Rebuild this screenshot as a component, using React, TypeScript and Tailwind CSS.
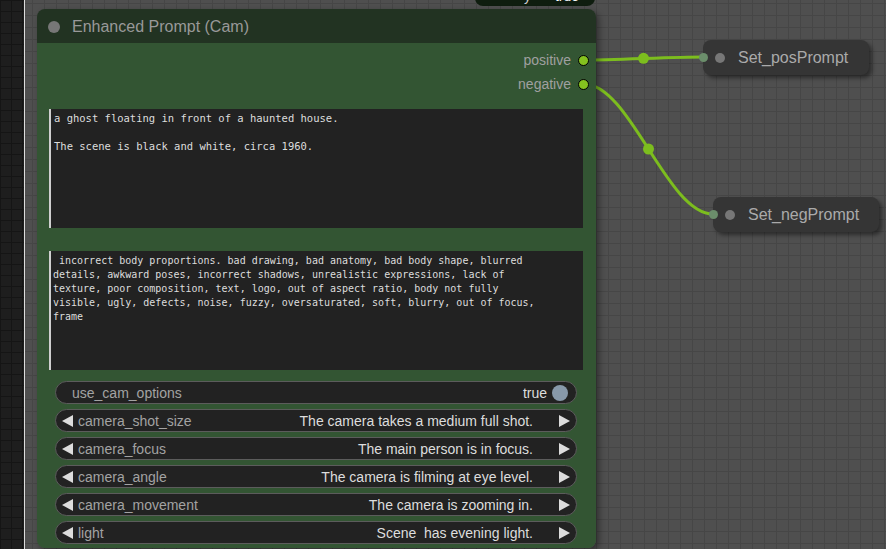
import React from "react";

const combos: [string, string][] = [
  ["camera_shot_size", "The camera takes a medium full shot."],
  ["camera_focus", "The main person is in focus."],
  ["camera_angle", "The camera is filming at eye level."],
  ["camera_movement", "The camera is zooming in."],
  ["light", "Scene  has evening light."],
];

const negText = [
  " incorrect body proportions. bad drawing, bad anatomy, bad body shape, blurred",
  "details, awkward poses, incorrect shadows, unrealistic expressions, lack of",
  "texture, poor composition, text, logo, out of aspect ratio, body not fully",
  "visible, ugly, defects, noise, fuzzy, oversaturated, soft, blurry, out of focus,",
  "frame",
];

const Arrow = ({ dir }: { dir: "left" | "right" }) => (
  <svg width="11" height="12" viewBox="0 0 11 12" className="shrink-0">
    {dir === "left" ? (
      <polygon points="11,0 0,6 11,12" fill="#dddddd" />
    ) : (
      <polygon points="0,0 11,6 0,12" fill="#dddddd" />
    )}
  </svg>
);

const SetNode = ({ label, className }: { label: string; className: string }) => (
  <div
    className={`absolute h-[35px] w-[166px] rounded-lg bg-[#353535] shadow-[3px_3px_4px_rgba(0,0,0,0.45)] flex items-center pl-[12px] gap-[13px] ${className}`}
  >
    {/* connected input slot */}
    <div className="absolute left-[-4px] top-[13px] w-[9px] h-[9px] rounded-full bg-[#6b8e6b]" />
    <div className="w-[10px] h-[10px] rounded-full bg-[#777]" />
    <span className="text-[16px] text-[#aaaaaa] leading-none">{label}</span>
  </div>
);

const App = () => {
  return (
    <div className="flex w-[886px] h-[549px] overflow-hidden font-['Liberation_Sans',Arial,sans-serif]">
      {/* side strip */}
      <div className="w-[24px] shrink-0 bg-[#1e1e1e] bg-[linear-gradient(to_right,#151515_1px,transparent_1px),linear-gradient(to_bottom,#151515_1px,transparent_1px)] bg-[size:11px_11px]" />
      <div className="w-px shrink-0 bg-[#dcdcdc]" />

      {/* canvas */}
      <div className="relative flex-1 bg-[#4f4f4f] bg-[linear-gradient(to_right,#464646_1px,transparent_1px),linear-gradient(to_bottom,#464646_1px,transparent_1px)] bg-[size:12px_12px] bg-[position:7px_3px]">
        {/* node peeking in from above */}
        <div className="absolute left-[450px] top-[-24px] w-[120px] h-[30px] rounded-lg bg-[#0f1d0f] flex items-end justify-end gap-6 pr-4 pb-[3px] overflow-hidden">
          <span className="text-[14px] leading-none text-[#ccc]">y</span>
          <span className="text-[14px] leading-none text-white">true</span>
        </div>

        {/* links */}
        <svg className="absolute inset-0 pointer-events-none" width="861" height="549">
          <path d="M559 60 C589 60 648 57 678 57" stroke="#7cbd1e" strokeWidth="3" fill="none" />
          <path d="M559 84 C605 84 642 214 688 214" stroke="#7cbd1e" strokeWidth="3" fill="none" />
          <circle cx="618.5" cy="58.3" r="5.5" fill="#7cbd1e" />
          <circle cx="623.5" cy="149" r="5.5" fill="#7cbd1e" />
        </svg>

        {/* main node */}
        <div className="absolute left-[12px] top-[9px] w-[559px] h-[539px] rounded-lg shadow-[3px_3px_6px_rgba(0,0,0,0.4)] flex flex-col overflow-hidden">
          <div className="h-[34px] shrink-0 bg-[#223322] flex items-center pl-[11px] gap-3 pt-px">
            <div className="w-3 h-3 rounded-full bg-[#777]" />
            <span className="text-[16px] text-[#999] leading-none">Enhanced Prompt (Cam)</span>
          </div>

          <div className="flex-1 bg-[#335533] flex flex-col pt-[5px]">
            {["positive", "negative"].map((o) => (
              <div key={o} className="h-6 flex items-center justify-end gap-[7px] pr-[7px]">
                <span className="text-[14px] text-[#a0a0a0] leading-none">{o}</span>
                <div className="w-[11px] h-[11px] rounded-full bg-[#84c21f] border border-black" />
              </div>
            ))}

            <div className="mt-[13px] ml-[12px] mr-[13px] h-[119px] bg-[#222] border-l-2 border-[#cfcfcf] pl-[3px] pt-[2px] font-['DejaVu_Sans_Mono',monospace] text-[10.5px] leading-[14px] text-[#dddddd] whitespace-pre">
              {"a ghost floating in front of a haunted house.\n\nThe scene is black and white, circa 1960."}
            </div>

            <div className="mt-[23px] ml-[12px] mr-[13px] h-[119px] bg-[#222] border-l-2 border-[#cfcfcf] pl-[2px] pt-[3px] font-['DejaVu_Sans_Mono',monospace] text-[10px] leading-[14px] text-[#dddddd] whitespace-pre">
              {negText.join("\n")}
            </div>

            <div className="mt-[11px] ml-[18px] mr-[19px] flex flex-col gap-[5px]">
              <div className="h-[23px] rounded-full border border-[#5c5c5c] bg-[#222] flex items-center pl-4 pr-2">
                <span className="flex-1 text-[14px] leading-none text-[#a3a3a3]">use_cam_options</span>
                <span className="text-[14px] leading-none text-[#dddddd]">true</span>
                <div className="ml-[5px] w-4 h-4 rounded-full bg-[#8899aa]" />
              </div>
              {combos.map(([label, value]) => (
                <div
                  key={label}
                  className="h-[23px] rounded-full border border-[#5c5c5c] bg-[#222] flex items-center pl-[6px] pr-[6px]"
                >
                  <Arrow dir="left" />
                  <span className="ml-[5px] text-[14px] leading-none text-[#a3a3a3]">{label}</span>
                  <span className="flex-1 text-right text-[14px] leading-none text-[#dddddd] whitespace-pre">
                    {value}
                  </span>
                  <span className="ml-[26px]">
                    <Arrow dir="right" />
                  </span>
                </div>
              ))}
            </div>
          </div>
        </div>

        <SetNode label="Set_posPrompt" className="left-[678px] top-[40px]" />
        <SetNode label="Set_negPrompt" className="left-[688px] top-[197px]" />
      </div>
    </div>
  );
};

export default App;
